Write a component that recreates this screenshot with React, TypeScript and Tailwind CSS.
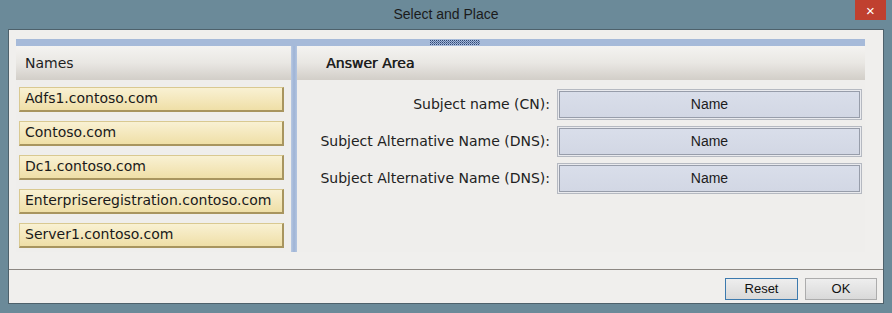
import React from "react";

const names = [
    "Adfs1.contoso.com",
    "Contoso.com",
    "Dc1.contoso.com",
    "Enterpriseregistration.contoso.com",
    "Server1.contoso.com",
];

const targets = [
    "Subject name (CN):",
    "Subject Alternative Name (DNS):",
    "Subject Alternative Name (DNS):",
];

const Grip = () => (
    <svg width="50" height="5" viewBox="0 0 50 5" className="block">
        <defs>
            <pattern id="grip" width="2" height="2" patternUnits="userSpaceOnUse">
                <rect x="0" y="0" width="1" height="1" fill="#2f4673" />
                <rect x="1" y="1" width="1" height="1" fill="#5c72a0" />
            </pattern>
        </defs>
        <rect x="0" y="0" width="50" height="5" fill="url(#grip)" />
    </svg>
);

const PanelHeader = ({ title, pad }: { title: string; pad: string }) => (
    <div
        className={`h-[34px] flex items-center ${pad} bg-gradient-to-b from-[#f4f3f1] via-[#e9e7e3] to-[#d2cec8] text-[14px] text-[#1e1e1e]`}
    >
        {title}
    </div>
);

const App = () => {
    return (
        <div className="w-[892px] h-[313px] bg-[#6b8a99] flex flex-col font-['DejaVu_Sans',sans-serif] overflow-hidden">
            <div className="h-[29px] grid grid-cols-[1fr_auto_1fr] items-start">
                <div />
                <div className="pt-[6px] text-[14px] leading-[17px] font-['Liberation_Sans',sans-serif] text-[#1b1b1b]">
                    Select and Place
                </div>
                <div className="flex justify-end pr-[6px]">
                    <div className="w-[31px] h-[20px] bg-[#c0402f] flex items-center justify-center text-white text-[15px] leading-none font-['Liberation_Sans',sans-serif]">
                        ×
                    </div>
                </div>
            </div>

            <div className="mx-[8px] h-[275px] border border-[#4e616b] bg-[#f0efed] flex flex-col">
                {/* main panel */}
                <div className="pt-[9px] pl-[7px] pr-[18px]">
                    <div className="h-[7px] bg-[#a6bad9] flex items-center">
                        <div className="ml-[414px]">
                            <Grip />
                        </div>
                    </div>
                    <div className="h-[206px] flex">
                        <div className="w-[275px] bg-[#efeeec] flex flex-col">
                            <PanelHeader title="Names" pad="pl-[9px]" />
                            <div className="pt-[7px] pl-[3px] flex flex-col gap-[9px]">
                                {names.map((n) => (
                                    <div
                                        key={n}
                                        className="w-[265px] h-[25px] flex items-center pl-[5px] pb-[2px] text-[14px] text-[#1a1a1a] bg-gradient-to-b from-[#f9f1d3] to-[#efdfa7] border-t border-l border-[#d9c991] border-r-2 border-b-2 border-r-[#a8955f] border-b-[#a8955f]"
                                    >
                                        {n}
                                    </div>
                                ))}
                            </div>
                        </div>
                        <div className="w-[6px] bg-gradient-to-r from-[#b8c9e2] via-[#9fb4d6] to-[#b3c5e0]" />
                        <div className="flex-1 bg-[#efeeec] flex flex-col">
                            <PanelHeader
                                title="Answer Area"
                                pad="pl-[29px] [text-shadow:0.5px_0_0_#1e1e1e]"
                            />
                            <div className="pt-[9px] pr-[3px] flex flex-col gap-[6px]">
                                {targets.map((t, i) => (
                                    <div key={i} className="flex items-center justify-end gap-[7px]">
                                        <span className="text-[14px] text-[#222]">{t}</span>
                                        <div className="w-[305px] h-[31px] border border-[#b5b9c1] bg-[#e9eaee] p-[1px]">
                                            <div className="h-full border border-[#979daa] bg-gradient-to-b from-[#d9deea] to-[#d2d7e4] flex items-center justify-center text-[14px] font-['Liberation_Sans',sans-serif] text-[#1c1c1c]">
                                                Name
                                            </div>
                                        </div>
                                    </div>
                                ))}
                            </div>
                        </div>
                    </div>
                </div>

                <div className="h-[17px]" />

                {/* footer */}
                <div className="flex-1 border-t border-[#8c8782] flex justify-end items-start pt-[8px] pr-[6px] gap-[7px] font-['Liberation_Sans',sans-serif] text-[13px] text-[#111]">
                    <button className="w-[73px] h-[22px] border border-[#3c7aae] bg-gradient-to-b from-[#eeeeee] to-[#d9d9d9] flex items-center justify-center">
                        Reset
                    </button>
                    <button className="w-[72px] h-[22px] border border-[#acacac] bg-gradient-to-b from-[#eeeeee] to-[#d9d9d9] flex items-center justify-center">
                        OK
                    </button>
                </div>
            </div>
        </div>
    );
};

export default App;
